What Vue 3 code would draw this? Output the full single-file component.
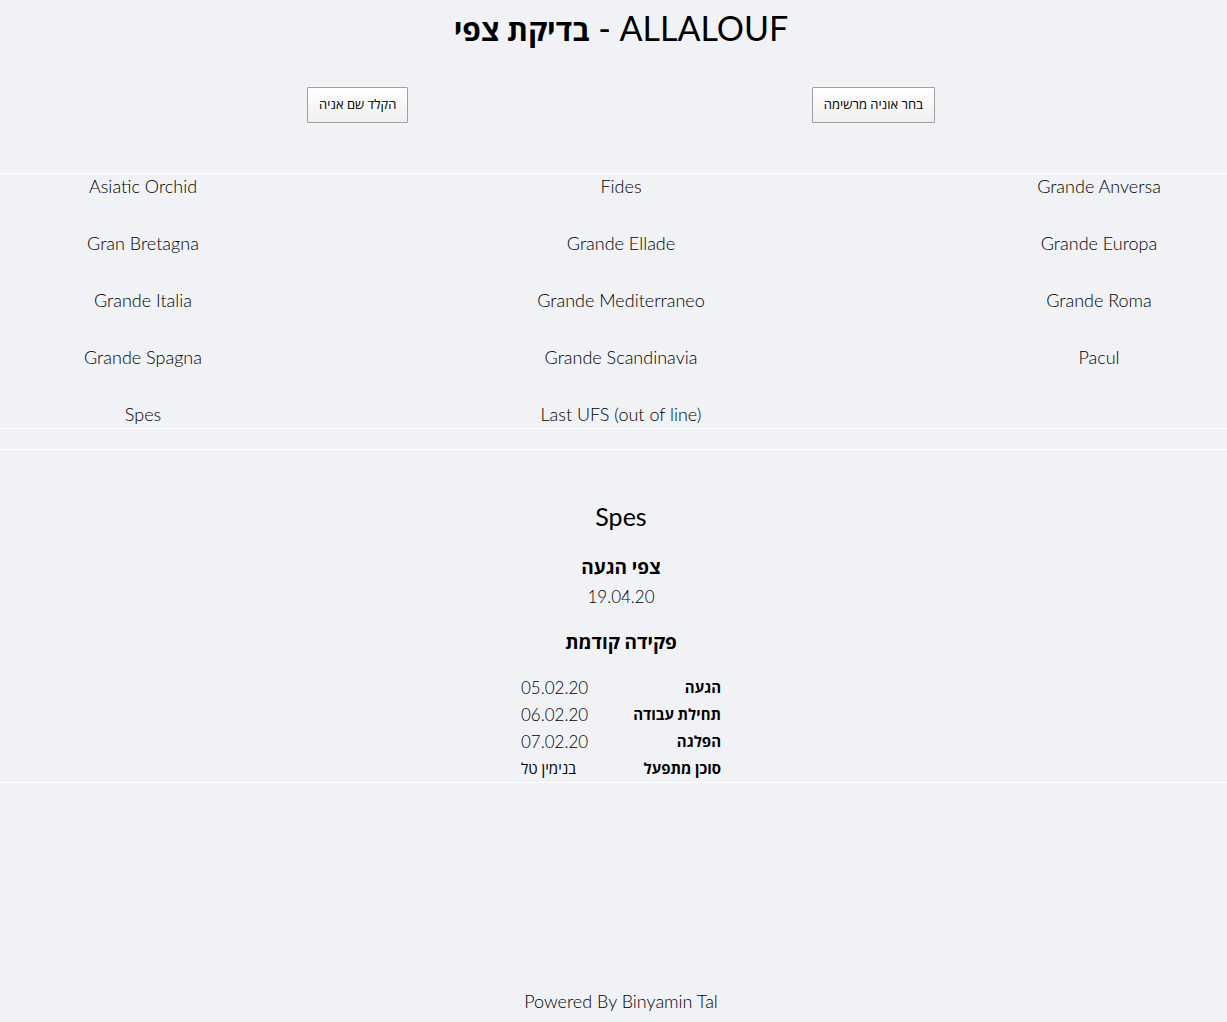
<script setup>
const ships = [
  'Asiatic Orchid', 'Fides', 'Grande Anversa',
  'Gran Bretagna', 'Grande Ellade', 'Grande Europa',
  'Grande Italia', 'Grande Mediterraneo', 'Grande Roma',
  'Grande Spagna', 'Grande Scandinavia', 'Pacul',
  'Spes', 'Last UFS (out of line)',
]

const previousCall = [
  { label: 'הגעה', value: '05.02.20' },
  { label: 'תחילת עבודה', value: '06.02.20' },
  { label: 'הפלגה', value: '07.02.20' },
  { label: 'סוכן מתפעל', value: 'בנימין טל', name: true },
]
</script>

<template>
  <div class="page">
    <header>
      <h1 dir="ltr"><bdi class="he">בדיקת צפי</bdi> - ALLALOUF</h1>
    </header>

    <nav class="modes" dir="rtl">
      <button type="button" class="mode">בחר אוניה מרשימה</button>
      <button type="button" class="mode">הקלד שם אניה</button>
    </nav>

    <section class="ships">
      <button v-for="ship in ships" :key="ship" type="button" class="ship">{{ ship }}</button>
    </section>

    <section class="details" dir="rtl">
      <h2>Spes</h2>
      <h3>צפי הגעה</h3>
      <p class="eta">19.04.20</p>
      <h3>פקידה קודמת</h3>
      <table>
        <tbody>
          <tr v-for="row in previousCall" :key="row.label">
            <th scope="row">{{ row.label }}</th>
            <td :class="{ name: row.name }"><bdi>{{ row.value }}</bdi></td>
          </tr>
        </tbody>
      </table>
    </section>

    <footer>Powered By Binyamin Tal</footer>
  </div>
</template>

<style>
body {
  margin: 0;
  background: #f0f2f6;
}
</style>

<style scoped>
.page {
  display: flex;
  flex-direction: column;
  box-sizing: border-box;
  min-height: 100vh;
  color: #000;
  font-family: Lato, 'Open Sans', sans-serif;
  font-size: 18px;
  font-weight: 300;
  line-height: 24px;
  text-align: center;
}

header,
.modes,
.ships,
.details,
footer {
  padding-left: 15px;
}

h1 {
  margin: 0;
  padding-top: 3px;
  font-size: 34px;
  font-weight: 400;
  line-height: 50px;
}

.he {
  font-size: 30px;
  font-weight: 700;
}

.modes {
  display: flex;
  justify-content: space-between;
  margin: 33px 23.8% 50px;
}

.mode {
  height: 36px;
  padding: 0 11px 2px;
  border: 1px solid #a0a0a0;
  border-radius: 1px;
  background: linear-gradient(#fff, #efefef);
  color: #000;
  font: 400 13px/18px 'Open Sans', sans-serif;
  cursor: pointer;
}

.ships {
  display: grid;
  grid-template-columns: repeat(3, 256px);
  justify-content: space-between;
  row-gap: 33px;
  padding-bottom: 2px;
  border-top: 1px solid #fff;
  border-bottom: 1px solid #fff;
}

.ship {
  justify-self: center;
  padding: 0;
  border: 0;
  background: none;
  color: inherit;
  font: inherit;
  cursor: pointer;
}

.details {
  margin-top: 20px;
  padding-top: 47px;
  border-top: 1px solid #fff;
  border-bottom: 1px solid #fff;
}

h2 {
  margin: 0 0 17px;
  font-size: 25px;
  font-weight: 400;
  line-height: 38px;
}

h3 {
  margin: 0;
  font-size: 19px;
  font-weight: 700;
  line-height: 30px;
}

.eta {
  margin: 0 0 15px;
  font-size: 17px;
  line-height: 30px;
}

table {
  width: 200px;
  margin: 17px auto 0;
  border-collapse: collapse;
  line-height: 27px;
}

th,
td {
  padding: 0;
}

th {
  font-size: 15px;
  font-weight: 700;
  text-align: right;
}

td {
  font-size: 17px;
  text-align: left;
}

.name {
  font-size: 15px;
  font-weight: 400;
}

footer {
  margin-top: auto;
  padding-bottom: 9px;
}
</style>
